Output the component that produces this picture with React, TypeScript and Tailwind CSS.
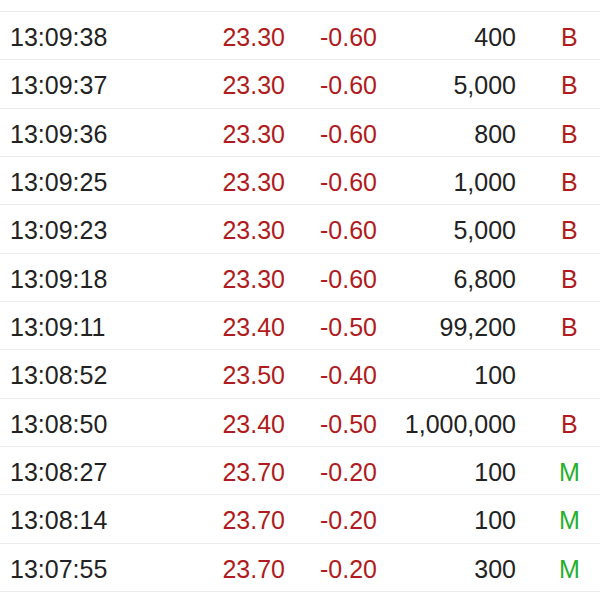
const trades = [
  { time: "13:09:40", price: "23.30", chg: "-0.60", vol: "1,000", side: "B" },
  { time: "13:09:38", price: "23.30", chg: "-0.60", vol: "400", side: "B" },
  { time: "13:09:37", price: "23.30", chg: "-0.60", vol: "5,000", side: "B" },
  { time: "13:09:36", price: "23.30", chg: "-0.60", vol: "800", side: "B" },
  { time: "13:09:25", price: "23.30", chg: "-0.60", vol: "1,000", side: "B" },
  { time: "13:09:23", price: "23.30", chg: "-0.60", vol: "5,000", side: "B" },
  { time: "13:09:18", price: "23.30", chg: "-0.60", vol: "6,800", side: "B" },
  { time: "13:09:11", price: "23.40", chg: "-0.50", vol: "99,200", side: "B" },
  { time: "13:08:52", price: "23.50", chg: "-0.40", vol: "100", side: "" },
  { time: "13:08:50", price: "23.40", chg: "-0.50", vol: "1,000,000", side: "B" },
  { time: "13:08:27", price: "23.70", chg: "-0.20", vol: "100", side: "M" },
  { time: "13:08:14", price: "23.70", chg: "-0.20", vol: "100", side: "M" },
  { time: "13:07:55", price: "23.70", chg: "-0.20", vol: "300", side: "M" },
];

export default function App() {
  return (
    <div className="h-[600px] w-[600px] overflow-hidden bg-white font-['Liberation_Sans',Arial,sans-serif] text-[25px] text-[#222]">
      <div className="mt-[-36.33px]">
        {trades.map((t, i) => (
          <div
            key={i}
            className={
              "grid h-[48.33px] grid-cols-[285px_92px_139px_84px] items-center border-b border-[#ececec] leading-none " +
              (i === 0 ? "pt-0" : "pt-[4px]")
            }
          >
            <div className="flex justify-between pl-[10px]">
              <span>{t.time}</span>
              <span className="text-[#b01b20]">{t.price}</span>
            </div>
            <span className="text-right text-[#b01b20]">{t.chg}</span>
            <span className="text-right">{t.vol}</span>
            <span className={t.side === "M" ? "pl-[43px] text-[#25b02a]" : "pl-[45px] text-[#b01b20]"}>{t.side}</span>
          </div>
        ))}
      </div>
    </div>
  );
}
